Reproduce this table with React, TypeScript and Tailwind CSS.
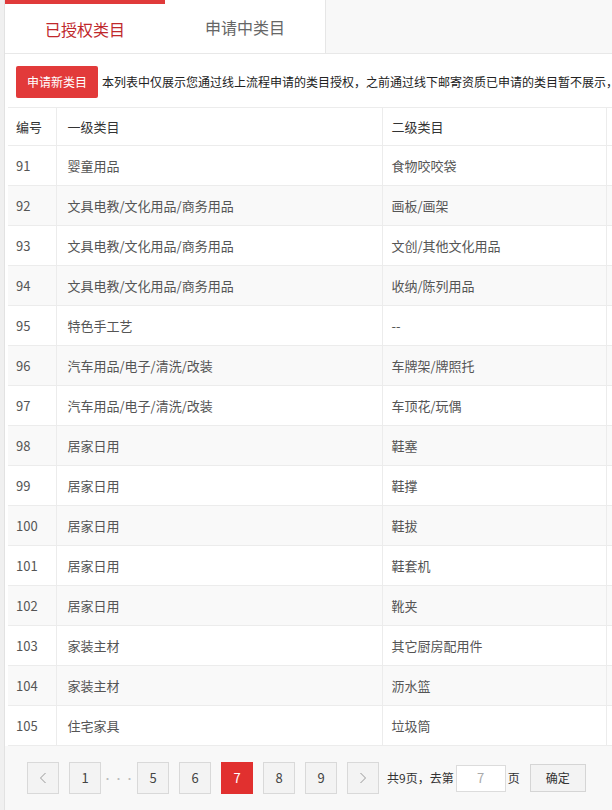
import React from 'react';

const rows: [string, string, string][] = [
  ['91', '婴童用品', '食物咬咬袋'],
  ['92', '文具电教/文化用品/商务用品', '画板/画架'],
  ['93', '文具电教/文化用品/商务用品', '文创/其他文化用品'],
  ['94', '文具电教/文化用品/商务用品', '收纳/陈列用品'],
  ['95', '特色手工艺', '--'],
  ['96', '汽车用品/电子/清洗/改装', '车牌架/牌照托'],
  ['97', '汽车用品/电子/清洗/改装', '车顶花/玩偶'],
  ['98', '居家日用', '鞋塞'],
  ['99', '居家日用', '鞋撑'],
  ['100', '居家日用', '鞋拔'],
  ['101', '居家日用', '鞋套机'],
  ['102', '居家日用', '靴夹'],
  ['103', '家装主材', '其它厨房配用件'],
  ['104', '家装主材', '沥水篮'],
  ['105', '住宅家具', '垃圾筒'],
];

const font = { fontFamily: '"Noto Sans CJK SC", "Noto Sans", sans-serif' };

const PageBox = ({ children, active }: { children: React.ReactNode; active?: boolean }) => (
  <div
    className={
      active
        ? 'w-[32px] h-[32px] flex items-center justify-center bg-[#e1302f] border border-[#e1302f] text-white text-[13px]'
        : 'w-[32px] h-[32px] flex items-center justify-center bg-[#f3f3f3] border border-[#d9d9d9] text-[#444] text-[13px]'
    }
  >
    {children}
  </div>
);

export default function App() {
  return (
    <div className="w-[612px] h-[810px] overflow-hidden bg-[#f0f0f0] flex" style={font}>
      <div className="w-[5px] shrink-0 border-r border-[#e2e2e2]" />
      <div className="flex-1 flex flex-col min-w-0">
        {/* Tabs */}
        <div className="h-[54px] flex bg-[#f8f8f8] border-b border-[#e8e8e8] shrink-0">
          <div className="w-[160px] bg-white border-t-4 border-[#e03a3a] flex items-center justify-center text-[16px] text-[#c0282b]">
            已授权类目
          </div>
          <div className="w-[161px] bg-white border-r border-[#e6e6e6] flex items-center justify-center text-[16px] text-[#666]">
            申请中类目
          </div>
        </div>

        {/* Notice */}
        <div className="bg-white flex items-center gap-[4px] pl-[11px] pt-[12px] pb-[9px] whitespace-nowrap">
          <button className="h-[32px] px-[11px] rounded-[2px] bg-[#e23a3a] text-white text-[12px] shrink-0">申请新类目</button>
          <span className="text-[12px] text-[#222]">本列表中仅展示您通过线上流程申请的类目授权，之前通过线下邮寄资质已申请的类目暂不展示，</span>
        </div>

        {/* Table */}
        <div className="bg-white pl-[3px] overflow-hidden">
          <table className="border-collapse text-[13px] table-fixed w-[700px]">
            <colgroup>
              <col className="w-[48px]" />
              <col className="w-[326px]" />
              <col className="w-[224px]" />
              <col className="w-[102px]" />
            </colgroup>
            <thead>
              <tr className="h-[38px] border-t border-b border-[#ececec]">
                <th className="text-left font-normal text-[#333] pl-[8px] pt-[1px] border-r border-[#ececec]">编号</th>
                <th className="text-left font-normal text-[#333] pl-[11px] pt-[1px] border-r border-[#ececec]">一级类目</th>
                <th className="text-left font-normal text-[#333] pl-[9px] pt-[1px] border-r border-[#ececec]">二级类目</th>
                <th />
              </tr>
            </thead>
            <tbody>
              {rows.map(([id, a, b], i) => (
                <tr key={id} className={`h-[40px] border-b border-[#ececec] ${i % 2 === 1 ? 'bg-[#f9f9f9]' : 'bg-white'}`}>
                  <td className="pl-[8px] text-[#555] border-r border-[#ececec]">{id}</td>
                  <td className="pl-[11px] text-[#555] border-r border-[#ececec]">{a}</td>
                  <td className="pl-[9px] text-[#555] border-r border-[#ececec]">{b}</td>
                  <td />
                </tr>
              ))}
            </tbody>
          </table>
        </div>

        {/* Pagination */}
        <div className="flex-1 bg-[#f8f8f8] flex items-start pt-[16px] pl-[22px] text-[12px] text-[#333]">
          <div className="flex items-center">
            <PageBox>
              <svg width="8" height="12" viewBox="0 0 8 12" fill="none" stroke="#999" strokeWidth="1">
                <path d="M6.5 1 L1.5 6 L6.5 11" />
              </svg>
            </PageBox>
            <div className="ml-[10px]"><PageBox>1</PageBox></div>
            <span className="w-[36px] text-center text-[#bbb] text-[10px] tracking-[1px]">···</span>
            <PageBox>5</PageBox>
            <div className="ml-[10px]"><PageBox>6</PageBox></div>
            <div className="ml-[10px]"><PageBox active>7</PageBox></div>
            <div className="ml-[10px]"><PageBox>8</PageBox></div>
            <div className="ml-[10px]"><PageBox>9</PageBox></div>
            <div className="ml-[10px]">
              <PageBox>
                <svg width="8" height="12" viewBox="0 0 8 12" fill="none" stroke="#999" strokeWidth="1">
                  <path d="M1.5 1 L6.5 6 L1.5 11" />
                </svg>
              </PageBox>
            </div>
            <span className="ml-[8px]">共9页，去第</span>
            <div className="ml-[2px] w-[50px] h-[27px] bg-white border border-[#dcdcdc] flex items-center justify-center text-[#aaa] text-[13px]">7</div>
            <span className="ml-[2px]">页</span>
            <button className="ml-[10px] w-[56px] h-[28px] bg-[#f3f3f3] border border-[#d5d5d5] text-[12px] text-[#333]">确定</button>
          </div>
        </div>
      </div>
    </div>
  );
}
